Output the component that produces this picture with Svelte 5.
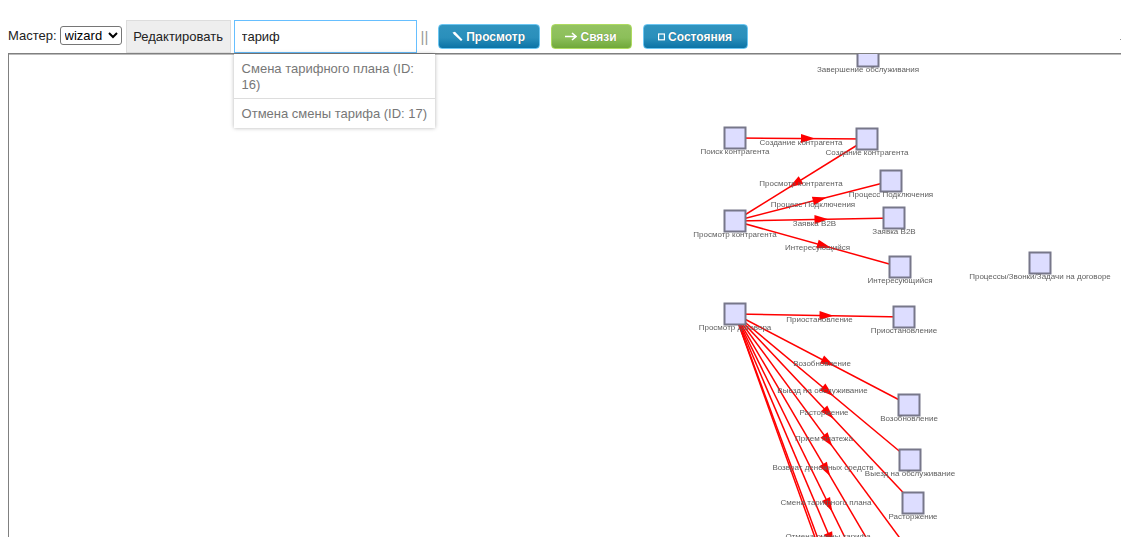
<script>
  const nodes = [
    { x: 868, y: 56, name: "Завершение обслуживания" },
    { x: 735, y: 138, name: "Поиск контрагента" },
    { x: 867, y: 139, name: "Создание контрагента" },
    { x: 891, y: 181, name: "Процесс Подключения" },
    { x: 735, y: 221, name: "Просмотр контрагента" },
    { x: 894, y: 218, name: "Заявка B2B" },
    { x: 900, y: 267, name: "Интересующийся" },
    { x: 1040, y: 263, name: "Процессы/Звонки/Задачи на договоре" },
    { x: 735, y: 314, name: "Просмотр договора" },
    { x: 904, y: 317, name: "Приостановление" },
    { x: 909, y: 405, name: "Возобновление" },
    { x: 910, y: 460, name: "Выезд на обслуживание" },
    { x: 913, y: 503, name: "Расторжение" }
  ];

  // targets below the fold keep their real coordinates, the svg just clips them
  const edges = [
    { a: [735, 138], b: [867, 139], name: "Создание контрагента" },
    { a: [867, 139], b: [735, 221], name: "Просмотр контрагента" },
    { a: [735, 221], b: [891, 181], name: "Процесс Подключения" },
    { a: [735, 221], b: [894, 218], name: "Заявка B2B" },
    { a: [735, 221], b: [900, 267], name: "Интересующийся" },
    { a: [735, 314], b: [904, 317], name: "Приостановление" },
    { a: [735, 314], b: [909, 405], name: "Возобновление" },
    { a: [735, 314], b: [910, 460], name: "Выезд на обслуживание" },
    { a: [735, 314], b: [913, 503], name: "Расторжение" },
    { a: [735, 314], b: [913, 556], name: "Прием платежа" },
    { a: [735, 314], b: [911, 614], name: "Возврат денежных средств" },
    { a: [735, 314], b: [917, 684], name: "Смена тарифного плана" },
    { a: [735, 314], b: [921, 752], name: "Отмена смены тарифа" },
    { a: [735, 314], b: [900, 775], name: "" },
    { a: [735, 314], b: [900, 761], name: "" }
  ];

  function mid(e) {
    return [(e.a[0] + e.b[0]) / 2, (e.a[1] + e.b[1]) / 2];
  }

  function arrow(e) {
    const [mx, my] = mid(e);
    const dx = e.b[0] - e.a[0];
    const dy = e.b[1] - e.a[1];
    const len = Math.hypot(dx, dy);
    const ux = dx / len;
    const uy = dy / len;
    const tip = `${mx + ux * 14},${my + uy * 14}`;
    const l = `${mx - uy * 4.5},${my + ux * 4.5}`;
    const r = `${mx + uy * 4.5},${my - ux * 4.5}`;
    return `${tip} ${l} ${r}`;
  }
</script>

<div class="toolbar">
  <span class="label">Мастер:</span>
  <select class="wizard">
    <option>wizard</option>
  </select>
  <button class="edit">Редактировать</button>
  <div class="search">
    <input type="text" value="тариф" />
    <ul class="suggest">
      <li>Смена тарифного плана (ID: 16)</li>
      <li>Отмена смены тарифа (ID: 17)</li>
    </ul>
  </div>
  <span class="sep">||</span>
  <button class="tool blue view">
    <svg width="11" height="11" viewBox="0 0 11 11"><path d="M0.5 1.5 L3 0.8 L10.5 8.8 L9 10 L2 3.5 Z" fill="#fff" /></svg>
    Просмотр
  </button>
  <button class="tool green">
    <svg width="12" height="11" viewBox="0 0 12 11"><path d="M0 5.5 H10.5 M7 2 L11 5.5 L7 9" fill="none" stroke="#fff" stroke-width="1.6" /></svg>
    Связи
  </button>
  <button class="tool blue states">
    <svg width="7" height="11" viewBox="0 0 7 11"><rect x="0.6" y="3" width="5.8" height="5.8" fill="none" stroke="#fff" stroke-width="1.2" /></svg>
    Состояния
  </button>
  <i class="edge-mark"></i>
</div>

<div class="canvas">
  <svg class="graph" width="1113" height="484" viewBox="9 54 1113 484">
    {#each edges as e}
      <line x1={e.a[0]} y1={e.a[1]} x2={e.b[0]} y2={e.b[1]} class="edge" />
      <polygon points={arrow(e)} class="head" />
    {/each}
    {#each nodes as n}
      <rect x={n.x - 10.5} y={n.y - 10.5} width="21" height="21" class="node" />
    {/each}
    {#each edges as e}
      <text x={mid(e)[0]} y={mid(e)[1] + 6}>{e.name}</text>
    {/each}
    {#each nodes as n}
      <text x={n.x} y={n.y + 16}>{n.name}</text>
    {/each}
  </svg>
</div>

<style>
  :global(body) {
    background: #fff;
    overflow: hidden;
    font-family: "Liberation Sans", Arial, sans-serif;
    font-size: 13px;
  }

  .toolbar {
    display: flex;
    align-items: center;
    height: 33px;
    padding: 20px 0 0 8px;
    position: relative;
  }

  .label {
    margin: 0 3px 2px 0;
    color: #222;
  }

  .wizard {
    width: 62px;
    height: 19px;
    margin: 0 4px 2px 0;
    padding: 0;
    font-family: inherit;
    font-size: 13px;
    background: #fff;
    border: 1px solid #767676;
    border-radius: 3px;
  }

  .edit {
    width: 105px;
    height: 33px;
    margin-right: 3px;
    padding: 0;
    font-family: inherit;
    font-size: 13px;
    color: #222;
    background: #eee;
    border: 1px solid #ddd;
  }

  .search {
    position: relative;
    margin-right: 4px;
  }

  .search input {
    display: block;
    box-sizing: border-box;
    width: 183px;
    height: 33px;
    padding: 0 7px;
    font-family: inherit;
    font-size: 13px;
    color: #222;
    border: 1px solid #66bfff;
    outline: none;
  }

  .suggest {
    position: absolute;
    z-index: 2;
    top: 34px;
    left: 0;
    box-sizing: border-box;
    width: 201px;
    margin: 0;
    padding: 0 0 1px;
    list-style: none;
    color: #777;
    line-height: 16px;
    background: #fff;
    box-shadow: 0 0 4px rgba(0, 0, 0, 0.3);
  }

  .suggest li {
    padding: 7px 6px 5px 8px;
  }

  .suggest li + li {
    border-top: 1px solid #ddd;
  }

  .sep {
    width: 6px;
    margin-right: 11px;
    color: #999;
    font-size: 15px;
  }

  .tool {
    display: flex;
    align-items: center;
    justify-content: center;
    gap: 3px;
    height: 25px;
    margin-right: 11px;
    padding: 0;
    font-family: inherit;
    font-size: 12px;
    font-weight: bold;
    color: #fff;
    text-shadow: 0 0 1px rgba(0, 0, 0, 0.4);
    border-radius: 4px;
  }

  .blue {
    background: linear-gradient(#3094bf, #2a8fbb 55%, #0b73a6);
    border: 1px solid #6cc6f2;
  }

  .view {
    width: 102px;
  }

  .states {
    width: 105px;
  }

  .green {
    width: 81px;
    background: linear-gradient(#94c362, #8cbf5a 55%, #70a83a);
    border: 1px solid #aedb60;
  }

  .edge-mark {
    position: absolute;
    right: 0;
    top: 39px;
    width: 1px;
    height: 1px;
    background: #999;
  }

  .canvas {
    height: 484px;
    margin: 0 -2px 0 8px;
    border-top: 1px solid #808080;
    border-left: 1px solid #808080;
    box-shadow: inset 0 1px 0 #bbb;
    overflow: hidden;
  }

  /* the original is a scaled canvas, so everything in it is a little soft */
  .graph {
    display: block;
    filter: blur(0.3px);
  }

  .edge {
    stroke: #f00;
    stroke-width: 1.5;
  }

  .head {
    fill: #f00;
  }

  .node {
    fill: #ddddff;
    stroke: #77778a;
    stroke-width: 2;
  }

  text {
    font-family: "Liberation Sans", Arial, sans-serif;
    font-size: 8px;
    fill: #606060;
    text-anchor: middle;
  }
</style>
